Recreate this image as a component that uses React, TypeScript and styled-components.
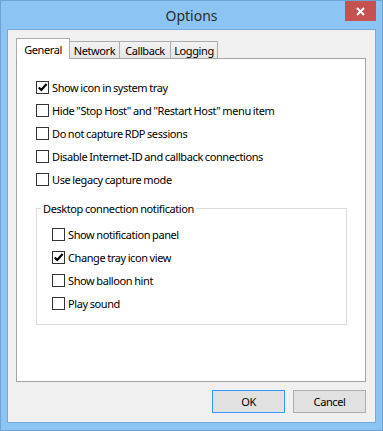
import React from 'react'
import styled, { createGlobalStyle } from 'styled-components'

const Global = createGlobalStyle`
  html, body { margin: 0; padding: 0; background: #8cc4f4; }
  body {
    font-family: "Noto Sans", "Liberation Sans", sans-serif;
    font-size: 11px;
    line-height: 15px;
    letter-spacing: -0.4px;
    word-spacing: -0.5px;
    color: #000;
  }
  * { box-sizing: border-box; }
`

const Window = styled.div`
  width: 383px;
  height: 431px;
  background: #8cc4f4;
  border: 1px solid #6fa3d6;
  padding: 0 6px 7px 6px;
  display: flex;
  flex-direction: column;
`

const TitleBar = styled.div`
  height: 29px;
  display: grid;
  grid-template-columns: 1fr auto 1fr;
  align-items: start;
`

const Title = styled.div`
  grid-column: 2;
  align-self: center;
  font-size: 14px;
  letter-spacing: 0;
  color: #2b2b2b;
  padding-top: 1px;
`

const CloseButton = styled.div`
  grid-column: 3;
  justify-self: end;
  width: 31px;
  height: 20px;
  background: #c75050;
  display: flex;
  align-items: center;
  justify-content: center;
`

const Client = styled.div`
  flex: 1;
  background: #f0f0f0;
  border: 1px solid #76a9da;
  padding: 8px 9px 9px 8px;
  display: flex;
  flex-direction: column;
`

const TabRow = styled.div`
  display: flex;
  align-items: flex-end;
  height: 20px;
`

const Tab = styled.div<{ $active?: boolean; $w: number }>`
  width: ${p => p.$w}px;
  height: ${p => (p.$active ? 21 : 17)}px;
  margin-bottom: ${p => (p.$active ? -1 : 0)}px;
  margin-left: ${p => (p.$active ? 0 : -1)}px;
  background: ${p => (p.$active ? '#fff' : 'linear-gradient(#f2f2f2, #e6e6e6)')};
  border: 1px solid #acacac;
  border-bottom: none;
  position: relative;
  z-index: ${p => (p.$active ? 2 : 1)};
  display: flex;
  align-items: center;
  justify-content: center;
  padding-top: ${p => (p.$active ? 0 : 1)}px;
  white-space: nowrap;
`

const Panel = styled.div`
  width: 350px;
  height: 324px;
  background: #fff;
  border: 1px solid #a5a5a5;
  padding: 17px 18px 0 19px;
  display: flex;
  flex-direction: column;
`

const Row = styled.label`
  height: 23px;
  display: flex;
  align-items: center;
  gap: 3px;
  white-space: nowrap;
`

const Box = styled.span`
  width: 13px;
  height: 13px;
  border: 1px solid #333;
  background: #fff;
  display: flex;
  align-items: center;
  justify-content: center;
  flex-shrink: 0;
`

const Group = styled.fieldset`
  margin: 10px 0 0 0;
  padding: 0 0 9px 4px;
  border: 1px solid #dcdcdc;
  width: 311px;
`

const Legend = styled.legend`
  padding: 0 2px;
`

const GroupList = styled.div`
  padding: 7px 0 0 11px;
  display: flex;
  flex-direction: column;
`

const Buttons = styled.div`
  margin-top: 8px;
  display: flex;
  justify-content: flex-end;
  gap: 8px;
`

const Button = styled.div<{ $default?: boolean }>`
  width: 73px;
  height: 23px;
  background: #e1e1e1;
  border: 1px solid ${p => (p.$default ? '#3399ff' : '#adadad')};
  display: flex;
  align-items: center;
  justify-content: center;
`

function Check({ checked, children }: { checked?: boolean; children: React.ReactNode }) {
  return (
    <Row>
      <Box>
        {checked && (
          <svg width="11" height="11" viewBox="0 0 11 11">
            <path d="M1.8 5.4 L4.3 8 L9.6 2" fill="none" stroke="#000" strokeWidth="2.2" />
          </svg>
        )}
      </Box>
      <span>{children}</span>
    </Row>
  )
}

export default function App() {
  return (
    <>
      <Global />
      <Window>
        <TitleBar>
          <Title>Options</Title>
          <CloseButton>
            <svg width="9" height="9" viewBox="0 0 9 9">
              <path d="M1 1 L8 8 M8 1 L1 8" stroke="#fff" strokeWidth="2" />
            </svg>
          </CloseButton>
        </TitleBar>
        <Client>
          <TabRow>
            <Tab $active $w={54}>General</Tab>
            <Tab $w={51}>Network</Tab>
            <Tab $w={52}>Callback</Tab>
            <Tab $w={48}>Logging</Tab>
          </TabRow>
          <Panel>
            <Check checked>Show icon in system tray</Check>
            <Check>Hide "Stop Host" and "Restart Host" menu item</Check>
            <Check>Do not capture RDP sessions</Check>
            <Check>Disable Internet-ID and callback connections</Check>
            <Check>Use legacy capture mode</Check>
            <Group>
              <Legend>Desktop connection notification</Legend>
              <GroupList>
                <Check>Show notification panel</Check>
                <Check checked>Change tray icon view</Check>
                <Check>Show balloon hint</Check>
                <Check>Play sound</Check>
              </GroupList>
            </Group>
          </Panel>
          <Buttons>
            <Button $default>OK</Button>
            <Button>Cancel</Button>
          </Buttons>
        </Client>
      </Window>
    </>
  )
}
